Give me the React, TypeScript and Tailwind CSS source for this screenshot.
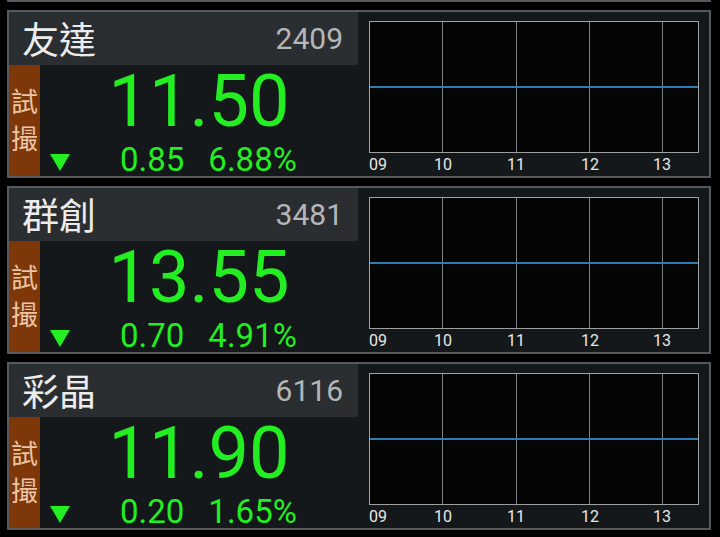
import React from "react";

type Stock = { name: string; code: string; price: string; change: string; pct: string };

const stocks: Stock[] = [
  { name: "友達", code: "2409", price: "11.50", change: "0.85", pct: "6.88%" },
  { name: "群創", code: "3481", price: "13.55", change: "0.70", pct: "4.91%" },
  { name: "彩晶", code: "6116", price: "11.90", change: "0.20", pct: "1.65%" },
];

const labels = [
  { t: "09", left: 0, center: false },
  { t: "10", left: 74, center: true },
  { t: "11", left: 147, center: true },
  { t: "12", left: 221, center: true },
  { t: "13", left: 293, center: true },
];

function Chart() {
  return (
    <div className="flex flex-col">
      <svg width={330} height={132} className="block">
        <rect x={0} y={0} width={330} height={132} fill="#050505" />
        {[73.5, 147.5, 220.5, 293.5].map((x) => (
          <line key={x} x1={x} y1={0} x2={x} y2={132} stroke="#7b7f81" strokeWidth={1} />
        ))}
        <line x1={1} y1={66} x2={329} y2={66} stroke="#2e7db4" strokeWidth={2} />
        <rect x={0.5} y={0.5} width={329} height={131} fill="none" stroke="#9da1a3" strokeWidth={1} />
      </svg>
      <div className="relative mt-[4px] h-[17px] font-['Roboto',sans-serif] text-[16px] leading-none text-[#e8e8e8]">
        {labels.map((l) =>
          l.center ? (
            <span key={l.t} className="absolute top-0 -translate-x-1/2" style={{ left: l.left }}>
              {l.t}
            </span>
          ) : (
            <span key={l.t} className="absolute top-0" style={{ left: l.left }}>
              {l.t}
            </span>
          )
        )}
      </div>
    </div>
  );
}

function Card({ s }: { s: Stock }) {
  return (
    <div className="ml-[7px] mt-[8px] flex h-[168px] w-[704px] border-2 border-[#56595c] bg-[#15181a]">
      <div className="flex w-[349px] flex-col">
        <div className="flex h-[53px] items-center justify-between bg-[#2b2e30] pl-[13px] pr-[15px]">
          <span className="font-['Noto_Sans_CJK_TC',sans-serif] text-[37px] leading-none text-[#ececec]">
            {s.name}
          </span>
          <span className="font-['Roboto',sans-serif] text-[30px] leading-none text-[#b4b7b9]">{s.code}</span>
        </div>
        <div className="flex flex-1">
          <div className="flex w-[31px] flex-col items-center justify-center bg-[#7e3708] pb-[3px] font-['Noto_Sans_CJK_TC',sans-serif] text-[27px] leading-[37px] text-[#eac5a6]">
            <span>試</span>
            <span>撮</span>
          </div>
          <div className="flex flex-1 flex-col font-['Roboto',sans-serif] text-[#22ee22]">
            <div className="mt-[4px] text-center text-[72px] leading-[66px]">{s.price}</div>
            <div className="mt-[11px] flex items-start text-[33px] leading-[28px]">
              <svg width={20} height={17} className="ml-[10px] mt-[8px] block shrink-0">
                <polygon points="0,0 20,0 10,17" fill="#22ee22" />
              </svg>
              <span className="ml-[50px]">{s.change}</span>
              <span className="ml-[24px]">{s.pct}</span>
            </div>
          </div>
        </div>
      </div>
      <div className="flex-1 pl-[11px] pr-[10px] pt-[9px]">
        <Chart />
      </div>
    </div>
  );
}

export default function App() {
  return (
    <div className="h-[537px] w-[720px] overflow-hidden bg-black">
      <div className="ml-[7px] h-[2px] w-[704px] bg-[#56595c]" />
      {stocks.map((s) => (
        <Card key={s.code} s={s} />
      ))}
    </div>
  );
}
